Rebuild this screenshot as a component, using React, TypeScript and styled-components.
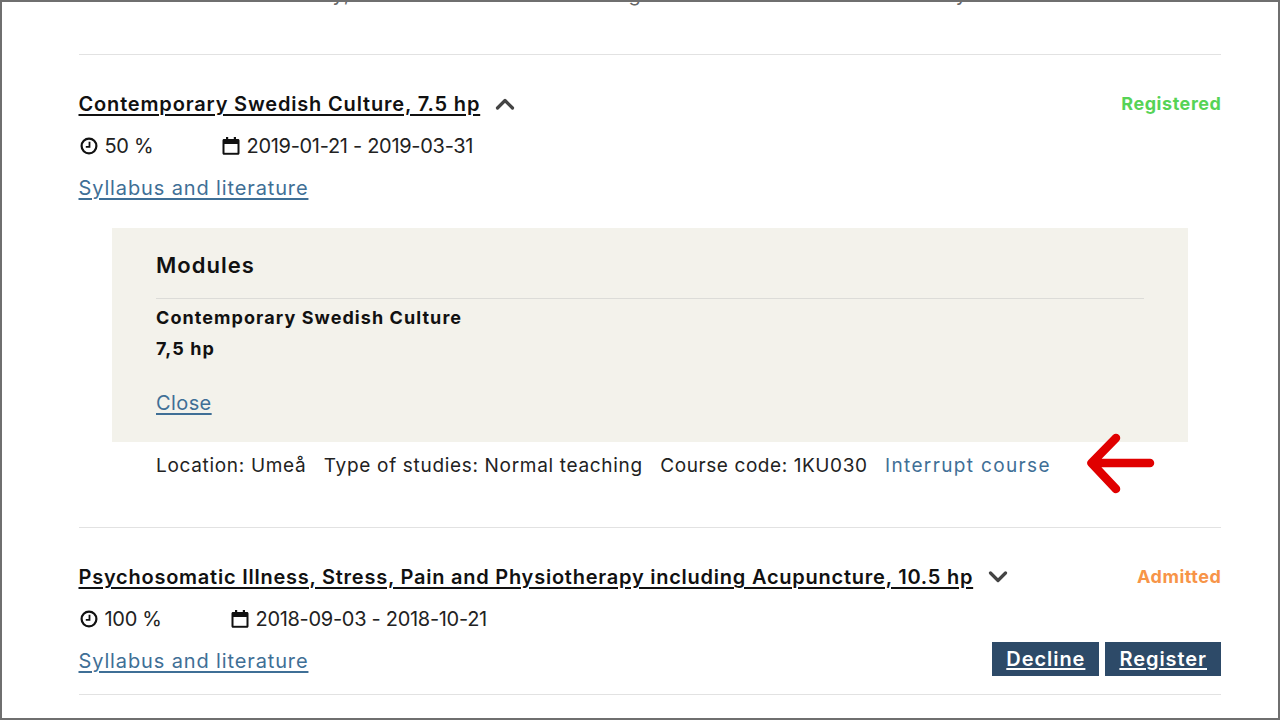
import React from 'react';
import styled, { createGlobalStyle } from 'styled-components';

const GlobalStyle = createGlobalStyle`
  html, body {
    margin: 0;
    padding: 0;
    background: #fff;
  }
  body {
    font-family: 'Inter', 'Noto Sans', 'Liberation Sans', sans-serif;
    color: #111;
  }
`;

const ClockIcon = () => (
  <MetaIcon viewBox="0 0 18 18">
    <circle cx="9" cy="9" r="7.400" fill="none" stroke="#111" strokeWidth="2.200" />
    <path d="M9.500 4.800V9.800H5.800" fill="none" stroke="#111" strokeWidth="1.800" />
  </MetaIcon>
);

const CalendarIcon = () => (
  <MetaIcon viewBox="0 0 18 18">
    <path d="M4 0h2.200v2h5.600V0H14v2h2c.9 0 1.500.6 1.500 1.500v12.700c0 .9-.6 1.500-1.500 1.500H2c-.9 0-1.500-.6-1.500-1.500V3.500C.5 2.600 1.100 2 2 2h2z" fill="#111" />
    <rect x="2.500" y="7" width="13" height="8.800" fill="#fff" />
  </MetaIcon>
);

const Chevron = ({ up }: { up?: boolean }) => (
  <ChevronIcon viewBox="0 0 20 12">
    <path d={up ? 'M2.500 10L10 2.500L17.500 10' : 'M2.500 2L10 9.500L17.500 2'} fill="none" stroke="#444" strokeWidth="3.200" strokeLinecap="round" strokeLinejoin="round" />
  </ChevronIcon>
);

const App: React.FC = () => {
  return (
    <>
      <GlobalStyle />
      <Screen>
        <ClippedLine aria-hidden="true">
          <ClippedGlyph $left={254}>y</ClippedGlyph>
          <ClippedGlyph $left={0}>,</ClippedGlyph>
          <ClippedGlyph $left={279}>g</ClippedGlyph>
          <ClippedGlyph $left={315}>y</ClippedGlyph>
        </ClippedLine>
        <Course $top={39} $bottom={39}>
          <TitleRow>
            <TitleGroup>
              <CourseTitle href="#" $tracking={0.83}>Contemporary Swedish Culture, 7.5 hp</CourseTitle>
              <Chevron up />
            </TitleGroup>
            <Status $color="#56d356">Registered</Status>
          </TitleRow>
          <MetaRow>
            <MetaItem $width={142}>
              <ClockIcon />
              50 %
            </MetaItem>
            <MetaItem>
              <CalendarIcon />
              2019-01-21 - 2019-03-31
            </MetaItem>
          </MetaRow>
          <ActionRow>
            <TextLink href="#">Syllabus and literature</TextLink>
          </ActionRow>
          <ModulesPanel>
            <ModulesHeading>Modules</ModulesHeading>
            <ModuleName>Contemporary Swedish Culture</ModuleName>
            <ModulePoints>7,5 hp</ModulePoints>
            <TextLink href="#">Close</TextLink>
          </ModulesPanel>
          <DetailsRow>
            <span>Location: Umeå</span>
            <span>Type of studies: Normal teaching</span>
            <CourseCode>Course code: 1KU030</CourseCode>
            <PlainLink href="#">Interrupt course</PlainLink>
            <ArrowMark viewBox="0 0 68 62">
              <path d="M63 30H5M29 5L4.500 30L29 56" fill="none" stroke="#e00000" strokeWidth="8.500" strokeLinecap="round" strokeLinejoin="round" />
            </ArrowMark>
          </DetailsRow>
        </Course>
        <Course $top={39} $bottom={16}>
          <TitleRow>
            <TitleGroup>
              <CourseTitle href="#" $tracking={0.76}>Psychosomatic Illness, Stress, Pain and Physiotherapy including Acupuncture, 10.5 hp</CourseTitle>
              <Chevron />
            </TitleGroup>
            <Status $color="#f79448">Admitted</Status>
          </TitleRow>
          <MetaRow>
            <MetaItem $width={151}>
              <ClockIcon />
              100 %
            </MetaItem>
            <MetaItem>
              <CalendarIcon />
              2018-09-03 - 2018-10-21
            </MetaItem>
          </MetaRow>
          <ActionRow>
            <TextLink href="#">Syllabus and literature</TextLink>
            <Buttons>
              <ActionButton href="#">Decline</ActionButton>
              <ActionButton href="#">Register</ActionButton>
            </Buttons>
          </ActionRow>
        </Course>
      </Screen>
    </>
  );
};

export default App;

const Screen = styled.div`
  box-sizing: border-box;
  width: 1280px;
  height: 720px;
  overflow: hidden;
  padding: 0 57px 0 76.500px;
  border: 2px solid #6f6f6f;
`;

const ClippedLine = styled.div`
  display: flex;
  height: 52px;
  font-size: 20px;
  line-height: 6px;
  color: #666;
`;

const ClippedGlyph = styled.span<{ $left: number }>`
  height: 6px;
  margin-top: -11px;
  margin-left: ${(p) => p.$left}px;
`;

const Course = styled.section<{ $top: number; $bottom: number }>`
  border-top: 1.5px solid #e2e2e2;
  padding-top: ${(p) => p.$top}px;
  padding-bottom: ${(p) => p.$bottom}px;
  &:last-child {
    border-bottom: 1.5px solid #e2e2e2;
  }
`;

const TitleRow = styled.div`
  display: flex;
  justify-content: space-between;
  align-items: center;
  height: 20px;
`;

const TitleGroup = styled.div`
  display: flex;
  align-items: center;
  gap: 15px;
`;

const CourseTitle = styled.a<{ $tracking: number }>`
  font-size: 20px;
  font-weight: 600;
  line-height: 20px;
  letter-spacing: ${(p) => p.$tracking}px;
  color: #111;
  text-decoration: underline;
  text-underline-offset: 3px;
`;

const ChevronIcon = styled.svg`
  width: 20px;
  height: 12px;
`;

const Status = styled.span<{ $color: string }>`
  margin-right: -0.5px;
  font-size: 18px;
  font-weight: 700;
  line-height: 18px;
  letter-spacing: 0.55px;
  color: ${(p) => p.$color};
`;

const MetaRow = styled.div`
  display: flex;
  align-items: center;
  height: 24px;
  margin-top: 20px;
`;

const MetaItem = styled.div<{ $width?: number }>`
  display: flex;
  align-items: center;
  gap: 7px;
  width: ${(p) => (p.$width ? `${p.$width}px` : 'auto')};
  font-size: 20px;
  letter-spacing: -0.3px;
  color: #222;
`;

const MetaIcon = styled.svg`
  width: 18px;
  height: 18px;
  margin-left: 1px;
`;

const ActionRow = styled.div`
  display: flex;
  align-items: center;
  justify-content: space-between;
  height: 34px;
  margin-top: 13px;
`;

const TextLink = styled.a`
  font-size: 20px;
  letter-spacing: 0.87px;
  color: #3f6f96;
  text-decoration: underline;
  text-underline-offset: 3px;
`;

const ModulesPanel = styled.div`
  margin: 23px 33px 0 33.500px;
  padding: 24px 44px 27px;
  background: #f3f2eb;

  ${TextLink} {
    letter-spacing: 0.4px;
  }
`;

const ModulesHeading = styled.h3`
  margin: 0;
  padding-bottom: 19px;
  border-bottom: 1.5px solid #dcdcd8;
  font-size: 22px;
  font-weight: 600;
  line-height: 27px;
  letter-spacing: 1px;
  color: #111;
`;

const ModuleName = styled.div`
  margin-top: 8px;
  font-size: 18px;
  font-weight: 700;
  line-height: 22px;
  letter-spacing: 1.07px;
  color: #111;
`;

const ModulePoints = styled(ModuleName)`
  margin-top: 9px;
  margin-bottom: 31px;
`;

const DetailsRow = styled.div`
  position: relative;
  display: flex;
  align-items: center;
  gap: 17.500px;
  height: 46px;
  padding: 0 77.500px;
  font-size: 19px;
  letter-spacing: 0.68px;
  color: #222;
`;

const CourseCode = styled.span`
  letter-spacing: 0.58px;
`;

const PlainLink = styled.a`
  letter-spacing: 1.35px;
  color: #3f6f96;
  text-decoration: none;
`;

const ArrowMark = styled.svg`
  position: absolute;
  top: -9px;
  right: 66px;
  width: 68px;
  height: 62px;
`;

const Buttons = styled.div`
  display: flex;
  gap: 6px;
  margin-bottom: 4px;
`;

const ActionButton = styled.a`
  box-sizing: border-box;
  height: 34px;
  padding: 0 14px;
  background: #2d4a68;
  color: #fff;
  font-size: 20px;
  font-weight: 600;
  line-height: 34px;
  letter-spacing: 0.95px;
  text-decoration: underline;
  text-underline-offset: 2px;
`;
